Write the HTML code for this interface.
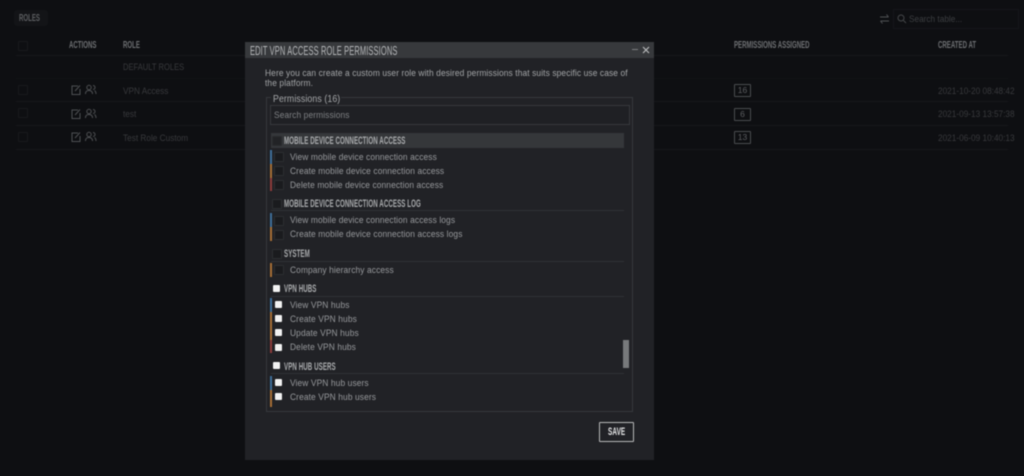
<!DOCTYPE html>
<html><head><meta charset="utf-8"><style>
html,body{margin:0;padding:0;background:#0e0f12}
#p{position:relative;width:1024px;height:476px;overflow:hidden;background:#0e0f12;font-family:"Liberation Sans",sans-serif;filter:blur(.4px)}
#p div,#p svg{position:absolute}
.t{white-space:nowrap;font-size:9.6px;line-height:12px;color:#97999c;letter-spacing:.12px;margin-top:1px;transform:scaleX(.875);transform-origin:0 50%}
.h{white-space:nowrap;font-size:11px;line-height:12px;font-weight:bold;margin-top:1px;transform:scaleX(.56);transform-origin:0 50%;color:#a9abad;letter-spacing:.15px}
.b{white-space:nowrap;font-size:9.6px;line-height:12px;color:#38393c;margin-top:1px;transform:scaleX(.86);transform-origin:0 50%}
.bh{white-space:nowrap;font-size:10.5px;line-height:12px;font-weight:bold;transform:scaleX(.58);transform-origin:0 50%;color:#6e7073}
.l{height:1px;background:#16171a}
.m{height:1px;background:#2f3135}
.c{width:7px;height:7px;background:#f2f2f2;border-radius:1px}
.e{width:8px;height:8px;background:#1a1b1e;border:1px solid #2c2e31;border-radius:1px}
.bar{width:2px;left:270px}
.bd{width:15px;height:11px;border:1px solid #4a4c4f;border-radius:1px;color:#5c5e61;font-size:8.5px;line-height:11px;text-align:center}
</style></head><body><div id="p">

<div style="left:14px;top:10px;width:34px;height:16px;background:#131417;border-radius:3px"></div>
<div class="bh" style="left:19px;top:12px;color:#5d5f62">ROLES</div>
<div class="bh" style="left:69px;top:39px">ACTIONS</div>
<div class="bh" style="left:123px;top:39px">ROLE</div>
<div class="bh" style="left:734px;top:39px">PERMISSIONS ASSIGNED</div>
<div class="bh" style="left:938px;top:39px">CREATED AT</div>
<div class="l" style="left:16px;top:55px;width:992px"></div>
<div class="e" style="left:18px;top:41px;background:none;border-color:#18191c"></div>
<div class="b" style="left:123px;top:61px;transform:scaleX(.79)">DEFAULT ROLES</div>
<div class="l" style="left:16px;top:78px;width:992px;background:#121316"></div>
<div class="b" style="left:123px;top:85px">VPN Access</div>
<div class="l" style="left:16px;top:101px;width:992px"></div>
<div class="b" style="left:123px;top:108px">test</div>
<div class="l" style="left:16px;top:125px;width:992px"></div>
<div class="b" style="left:123px;top:132px">Test Role Custom</div>
<div class="l" style="left:16px;top:149px;width:992px"></div>
<div class="e" style="left:18px;top:85px;background:none;border-color:#18191c"></div>
<div class="e" style="left:18px;top:108px;background:none;border-color:#18191c"></div>
<div class="e" style="left:18px;top:132px;background:none;border-color:#18191c"></div>

<svg style="left:71px;top:84px" width="26" height="12" fill="none" stroke="#4e5053" stroke-width="1"><path d="M7 2H1V10.500H9V5M4 7L9 1.500"/><circle cx="18" cy="3.500" r="2.200"/><path d="M14.500 10C14.500 7 16 6.500 18 6.500S21.500 7.500 21.500 10M22 1.500a2 2 0 0 1 0 4M23.500 6.500Q25 7.500 25 10"/></svg>
<svg style="left:71px;top:108px" width="26" height="12" fill="none" stroke="#4e5053" stroke-width="1"><path d="M7 2H1V10.500H9V5M4 7L9 1.500"/><circle cx="18" cy="3.500" r="2.200"/><path d="M14.500 10C14.500 7 16 6.500 18 6.500S21.500 7.500 21.500 10M22 1.500a2 2 0 0 1 0 4M23.500 6.500Q25 7.500 25 10"/></svg>
<svg style="left:71px;top:131px" width="26" height="12" fill="none" stroke="#4e5053" stroke-width="1"><path d="M7 2H1V10.500H9V5M4 7L9 1.500"/><circle cx="18" cy="3.500" r="2.200"/><path d="M14.500 10C14.500 7 16 6.500 18 6.500S21.500 7.500 21.500 10M22 1.500a2 2 0 0 1 0 4M23.500 6.500Q25 7.500 25 10"/></svg>

<div class="bd" style="left:734px;top:84px">16</div>
<div class="bd" style="left:734px;top:108px">6</div>
<div class="bd" style="left:734px;top:131px">13</div>
<div class="b" style="left:938px;top:85px">2021-10-20 08:48:42</div>
<div class="b" style="left:938px;top:108px">2021-09-13 13:57:38</div>
<div class="b" style="left:938px;top:132px">2021-06-09 10:40:13</div>

<svg style="left:879px;top:13px" width="11" height="12" fill="none" stroke="#505255" stroke-width="1"><path d="M1 4H9.500M7.500 1.500L9.500 4M10 8H1.500M3.500 10.500L1.500 8"/></svg>
<div style="left:893px;top:9px;width:126px;height:20px;border:1px solid #15161a;box-sizing:border-box"></div>
<svg style="left:897px;top:14px" width="10" height="10" fill="none" stroke="#45474a" stroke-width="1"><circle cx="4" cy="4" r="3"/><path d="M6.500 6.500L9 9"/></svg>
<div class="b" style="left:909px;top:13px;color:#3c3e41">Search table...</div>

<div style="left:245px;top:42px;width:409px;height:418px;background:#212226"></div>
<div style="left:245px;top:42px;width:409px;height:16px;background:#37393c"></div>
<div class="h" style="left:250px;top:44px;font-size:12.5px;color:#b5b7b9;font-weight:normal;letter-spacing:.2px;transform:scaleX(.6)">EDIT VPN ACCESS ROLE PERMISSIONS</div>
<div style="left:632px;top:49px;width:6px;height:1px;background:#7c7e80"></div>
<svg style="left:642px;top:46px" width="8" height="8" stroke="#b8b9ba" stroke-width="1.200"><path d="M1 1L7 7M7 1L1 7"/></svg>

<div class="t" style="left:265px;top:67px;color:#a3a5a7">Here you can create a custom user role with desired permissions that suits specific use case of</div>
<div class="t" style="left:265px;top:77px;color:#a3a5a7">the platform.</div>

<div style="left:266px;top:97px;width:367px;height:315px;border:1px solid #36383c;box-sizing:border-box"></div>
<div style="left:271px;top:92px;width:70px;height:12px;background:#212226"></div>
<div class="t" style="left:273px;top:93px;font-size:10px;color:#a6a8aa">Permissions (16)</div>
<div style="left:270px;top:105px;width:360px;height:20px;border:1px solid #36383c;box-sizing:border-box;background:#1f2024"></div>
<div class="t" style="left:274px;top:109px;color:#7f8184">Search permissions</div>

<div style="left:271px;top:133px;width:353px;height:15px;background:#35373a"></div>
<div class="e" style="left:272px;top:136px;background:#222326;border-color:#2a2b2e"></div>
<div class="h" style="left:284px;top:134px">MOBILE DEVICE CONNECTION ACCESS</div>

<div class="bar" style="top:150px;height:14px;background:#3d6d99"></div>
<div class="bar" style="top:164px;height:14px;background:#a56d35"></div>
<div class="bar" style="top:178px;height:13px;background:#8d3b3b"></div>
<div class="e" style="left:274px;top:152px"></div>
<div class="e" style="left:274px;top:166px"></div>
<div class="e" style="left:274px;top:180px"></div>
<div class="t" style="left:290px;top:151px">View mobile device connection access</div>
<div class="t" style="left:290px;top:165px">Create mobile device connection access</div>
<div class="t" style="left:290px;top:179px">Delete mobile device connection access</div>

<div class="e" style="left:272px;top:199px"></div>
<div class="h" style="left:284px;top:197px">MOBILE DEVICE CONNECTION ACCESS LOG</div>
<div class="m" style="left:271px;top:210px;width:353px"></div>
<div class="bar" style="top:213px;height:14px;background:#3d6d99"></div>
<div class="bar" style="top:227px;height:14px;background:#a56d35"></div>
<div class="e" style="left:274px;top:216px"></div>
<div class="e" style="left:274px;top:230px"></div>
<div class="t" style="left:290px;top:214px">View mobile device connection access logs</div>
<div class="t" style="left:290px;top:228px">Create mobile device connection access logs</div>

<div class="e" style="left:272px;top:249px"></div>
<div class="h" style="left:284px;top:247px">SYSTEM</div>
<div class="m" style="left:271px;top:261px;width:353px"></div>
<div class="bar" style="top:263px;height:14px;background:#a56d35"></div>
<div class="e" style="left:274px;top:265px"></div>
<div class="t" style="left:290px;top:264px">Company hierarchy access</div>

<div class="c" style="left:273px;top:285px"></div>
<div class="h" style="left:284px;top:282px">VPN HUBS</div>
<div class="m" style="left:271px;top:296px;width:353px"></div>
<div class="bar" style="top:298px;height:14px;background:#3d6d99"></div>
<div class="bar" style="top:312px;height:14px;background:#a56d35"></div>
<div class="bar" style="top:326px;height:14px;background:#a56d35"></div>
<div class="bar" style="top:340px;height:13px;background:#8d3b3b"></div>
<div class="c" style="left:275px;top:301px"></div>
<div class="c" style="left:275px;top:315px"></div>
<div class="c" style="left:275px;top:329px"></div>
<div class="c" style="left:275px;top:344px"></div>
<div class="t" style="left:290px;top:299px">View VPN hubs</div>
<div class="t" style="left:290px;top:313px">Create VPN hubs</div>
<div class="t" style="left:290px;top:327px">Update VPN hubs</div>
<div class="t" style="left:290px;top:341px">Delete VPN hubs</div>

<div class="c" style="left:273px;top:362px"></div>
<div class="h" style="left:284px;top:360px">VPN HUB USERS</div>
<div class="m" style="left:271px;top:373px;width:353px"></div>
<div class="bar" style="top:376px;height:14px;background:#3d6d99"></div>
<div class="bar" style="top:390px;height:17px;background:#a56d35"></div>
<div class="c" style="left:275px;top:379px"></div>
<div class="c" style="left:275px;top:393px"></div>
<div class="t" style="left:290px;top:377px">View VPN hub users</div>
<div class="t" style="left:290px;top:391px">Create VPN hub users</div>

<div style="left:623px;top:340px;width:6px;height:28px;background:#77797b"></div>

<div style="left:599px;top:422px;width:35px;height:20px;border:1px solid #b8b9ba;box-sizing:border-box;border-radius:1px"></div>
<div class="h" style="left:608px;top:425px;color:#e2e3e4;transform:scaleX(.58)">SAVE</div>
</div></body></html>
